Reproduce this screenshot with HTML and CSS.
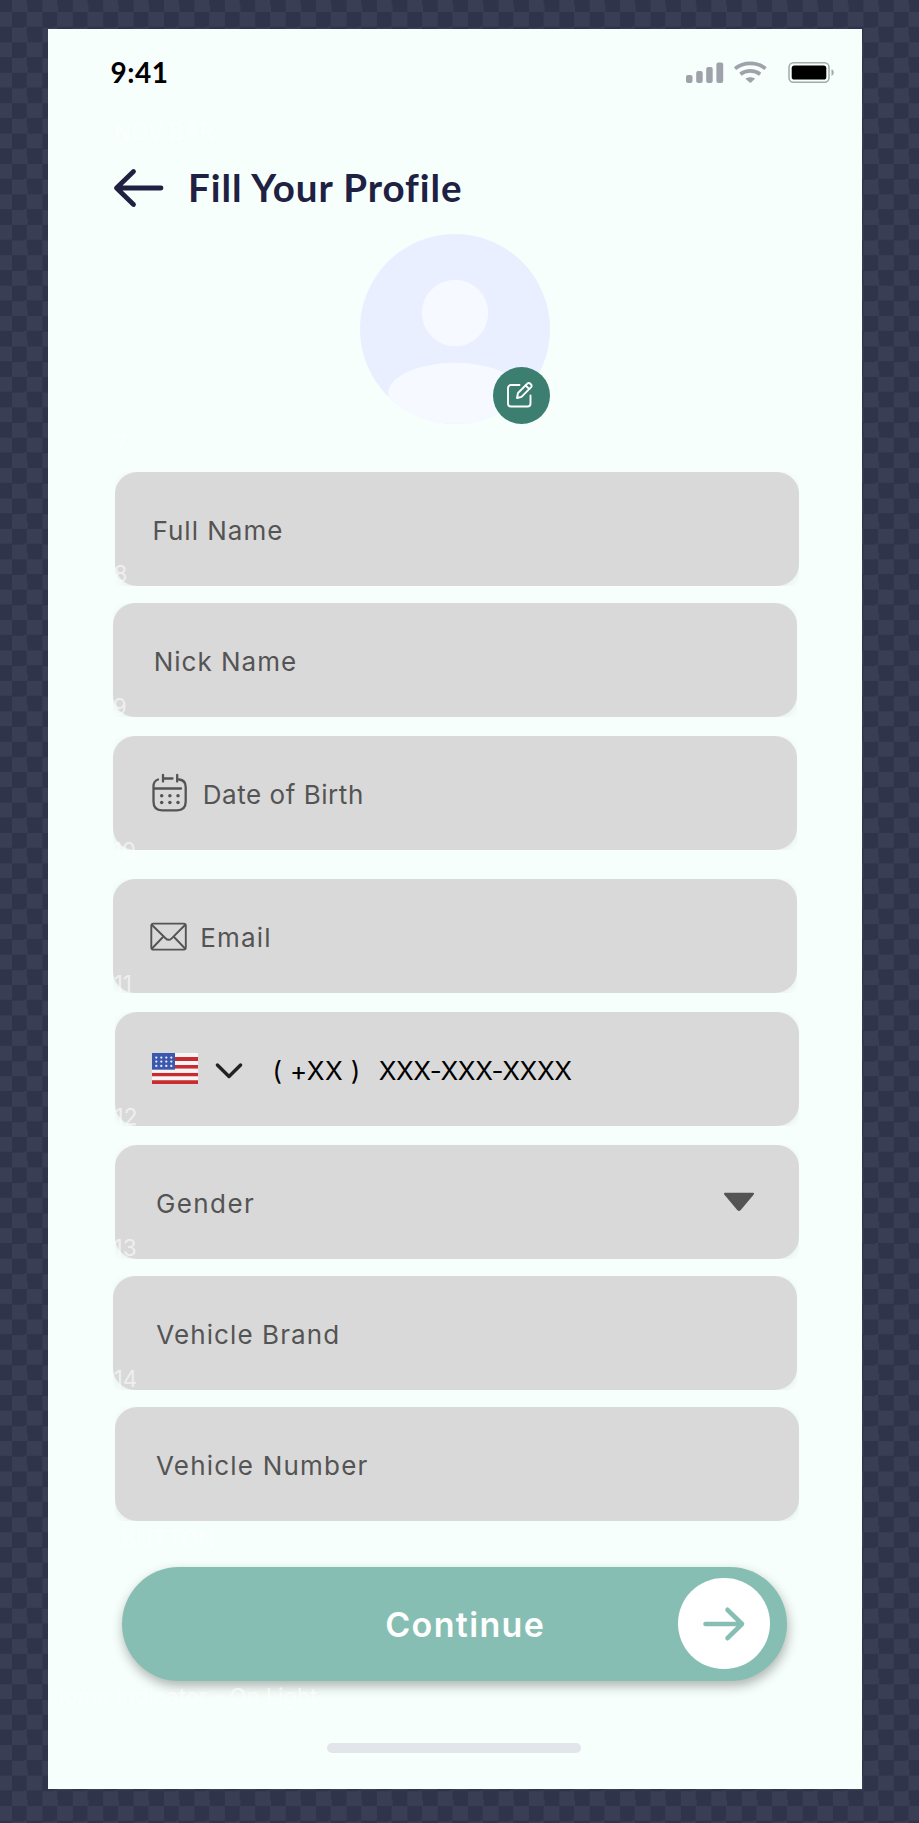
FILE: index.html
```html
<!DOCTYPE html>
<html lang="en">
<head>
<meta charset="utf-8">
<title>Fill Your Profile</title>
<link rel="stylesheet" href="styles.css">
</head>
<body>
<main class="screen">
  <header class="status">
    <span class="time">9:41</span>
    <svg class="status-icons" width="150" height="24" viewBox="0 0 150 24">
      <g fill="#a0a2ab">
        <rect x="0" y="14" width="6.5" height="8" rx="2"/>
        <rect x="10.2" y="10" width="6.5" height="12" rx="2"/>
        <rect x="20.2" y="6" width="6.5" height="16" rx="2"/>
        <rect x="30.4" y="1.5" width="6.8" height="20.5" rx="2"/>
        <path d="M59.500 17.700C62 15.700 66.600 15.700 69 17.700L65 21.500q-.7.600-1.400 0z"/>
      </g>
      <g fill="none" stroke="#a0a2ab" stroke-width="3.7">
        <path d="M49 7.6C57.5.7 71 .7 79.5 7.6"/>
        <path d="M54.4 13.2C60 8.8 68.6 8.8 74.2 13.2"/>
      </g>
      <rect x="103" y="1.7" width="40" height="19.6" rx="4.5" fill="none" stroke="#a3aaa8" stroke-width="1.5"/>
      <rect x="105.7" y="4.6" width="34.6" height="14" rx="2.6"/>
      <path d="M145.5 8.2c3 1.2 3 5.4 0 6.6z" fill="#a3aaa8"/>
    </svg>
  </header>

  <span class="layer layer-nav">NOV BAR</span>

  <div class="nav">
    <svg width="52" height="42" viewBox="0 0 52 42" fill="none" stroke="#202042" stroke-width="4.8" stroke-linecap="round" stroke-linejoin="round"><path d="M48 21H4M20.5 4.5 3.5 21l17 16.5"/></svg>
    <h1 class="title">Fill Your Profile</h1>
  </div>

  <div class="avatar">
    <svg width="190" height="190" viewBox="0 0 190 190">
      <defs><clipPath id="disc"><circle cx="95" cy="95" r="95"/></clipPath></defs>
      <circle cx="95" cy="95" r="95" fill="#e9efff"/>
      <circle cx="95" cy="79" r="33.2" fill="#f6f9ff"/>
      <ellipse cx="95" cy="159.4" rx="66.8" ry="30.6" fill="#f6f9ff" clip-path="url(#disc)"/>
    </svg>
    <span class="edit">
      <svg width="30" height="30" viewBox="0 0 30 30" fill="none" stroke="#fff" stroke-width="1.9" stroke-linecap="round" stroke-linejoin="round">
        <path d="M13.500 4H5a3 3 0 0 0-3 3v15.500a3 3 0 0 0 3 3h16.500a3 3 0 0 0 3-3v-8"/>
        <path d="m11 17 1-5L21.300 2.700c1.900-1.900 5.700 1.500 3.600 3.700l-9.400 9.400z"/><path d="m19.700 4.500 3.600 3.600"/>
      </svg>
    </span>
  </div>

  <form class="form">
    <div class="row r1"><div class="clip"><div class="field"><span class="label l-full">Full Name</span></div></div><span class="layer tag t7">7</span><span class="layer tag t8">8</span></div>
    <div class="row r2 out"><div class="clip"><div class="field"><span class="label l-nick">Nick Name</span></div></div><span class="layer tag t9">9</span></div>
    <div class="row r3 out"><div class="clip"><div class="field dob">
      <svg width="36" height="40" viewBox="0 0 36 40" fill="none" stroke="#545454" stroke-width="2.3" stroke-linecap="round">
        <path d="M6 6.500C3 7.500 1.500 10 1.500 13.500v15c0 6 2.500 8.800 8.500 8.800h15c6 0 8.700-2.800 8.700-8.800V14c0-4.500-2-7-6.500-7.500M11 2v6.500M25.200 2v6.500M11 5.500h9.500M25.200 5.500v2M2 15.500h27"/>
        <g fill="#545454" stroke="none"><circle cx="9.700" cy="22.700" r="1.750"/><circle cx="17.900" cy="22.700" r="1.750"/><circle cx="26" cy="22.700" r="1.750"/><circle cx="9.700" cy="29.600" r="1.750"/><circle cx="17.900" cy="29.600" r="1.750"/><circle cx="26" cy="29.600" r="1.750"/></g>
      </svg>
      <span class="label l-dob">Date of Birth</span></div></div><span class="layer tag t10">10</span></div>
    <div class="row r4 out"><div class="clip"><div class="field email">
      <svg width="38" height="30" viewBox="0 0 38 30" fill="none" stroke="#545454" stroke-width="1.900" stroke-linecap="round" stroke-linejoin="round">
        <rect x="1.300" y="1.600" width="34.500" height="26" rx="2"/>
        <path d="m2 3 13.500 13.300c2 2 4.200 2 6.200 0L35 3M2 26.500l10.500-11M35 26.500l-10.500-11"/>
      </svg>
      <span class="label l-email">Email</span></div></div><span class="layer tag t11">11</span></div>
    <div class="row r5"><div class="clip"><div class="field phone">
      <svg class="flag" width="46" height="31" viewBox="0 0 46 31">
        <path fill="#f5f5f5" d="M0 0h46v31H0z"/>
        <path fill="#c82c31" d="M0 4h46v4H0zM0 12h46v3.800H0zM0 19.800h46v3.400H0zM0 27.200h46V31H0z"/>
        <path fill="#f5f5f5" d="M0 15.800h46v4H0z"/>
        <path fill="#3c58ad" d="M0 0h23v16.700H0z"/>
        <g stroke="#e8ecfa" stroke-width="2.300" stroke-linecap="round" stroke-dasharray="0 5"><path d="M4.300 4.600h16M4.300 8.600h16M4.300 12.900h16"/></g>
      </svg>
      <svg class="chevron" width="30" height="18" viewBox="0 0 30 18" fill="none" stroke="#222" stroke-width="3.400" stroke-linecap="round" stroke-linejoin="round"><path d="m3.400 3 11.600 11.500L26.600 3"/></svg>
      <span class="number"><span class="code">( +XX )</span><span class="digits">XXX-XXX-XXXX</span></span></div></div><span class="layer tag t12">12</span></div>
    <div class="row r6"><div class="clip"><div class="field inset"><span class="label l-gender">Gender</span>
      <svg class="caret" width="34" height="22" viewBox="0 0 34 22"><path d="M3 1.800h28L17.800 17.500q-.8.800-1.600 0z" transform="translate(0 1)" fill="#545454" stroke="#545454" stroke-width="2" stroke-linejoin="round"/></svg></div></div><span class="layer tag t13">13</span></div>
    <div class="row r7 out"><div class="clip"><div class="field inset"><span class="label l-brand">Vehicle Brand</span></div></div><span class="layer tag t14">14</span></div>
    <div class="row r8"><div class="clip"><div class="field inset"><span class="label l-vnum">Vehicle Number</span></div></div></div>
  </form>

  <span class="layer layer-button">BUTTON</span>
  <button class="continue" type="button">
    <span class="continue-text">Continue</span>
    <span class="go"><svg width="46" height="38" viewBox="0 0 46 38" fill="none" stroke="#86beb3" stroke-width="4.600" stroke-linecap="round" stroke-linejoin="round"><path d="M4.500 19H41M26.500 4.800 41 19 26.500 33.200"/></svg></span>
  </button>
  <span class="layer layer-home">Home Indicator - On Light</span>
  <div class="home"></div>
</main>
</body>
</html>
```
FILE: styles.css
```css
* { box-sizing: border-box; }

body {
  margin: 0;
  padding: 29px 0 34px 48px;
  height: 1823px;
  overflow: hidden;
  font-family: Inter, "Open Sans", sans-serif;
  background: conic-gradient(#3a3e54 25%, #2f344a 0 50%, #3a3e54 0 75%, #2f344a 0) 12px 12px / 30.42px 30.42px;
}

svg { display: block; flex: none; }

.screen {
  position: relative;
  width: 813.6px;
  height: 1760px;
  overflow: hidden;
  background: #f6fffc;
}

.status {
  display: flex;
  justify-content: space-between;
  align-items: center;
  height: 88px;
  padding: 0 26px 0 62.500px;
}
.time {
  padding-bottom: 2px;
  font: 700 28px/34px Lato, sans-serif;
  letter-spacing: .5px;
  color: #000;
}

.nav {
  display: flex;
  align-items: center;
  gap: 23px;
  height: 84px;
  margin: 29px 0 0 65px;
}
.title {
  margin: 0;
  padding-bottom: 2px;
  font: 700 38.500px/50px Lato, sans-serif;
  letter-spacing: .95px;
  color: #202042;
  white-space: nowrap;
}

.avatar {
  position: relative;
  width: 190px;
  height: 190px;
  margin: 4px 0 0 311.700px;
}
.edit {
  position: absolute;
  right: 0;
  bottom: 0;
  display: grid;
  place-items: center;
  width: 57px;
  height: 57px;
  border-radius: 50%;
  background: #3c7e70;
}

.form { margin: 48px 0 0 66.500px; width: 684.500px; }
.row { position: relative; height: 114px; margin-bottom: 17px; }
.row.out { margin-left: -1.800px; margin-right: 1.800px; }
.r2 { margin-bottom: 19px; }
.r3 { margin-bottom: 29px; }
.r4, .r5 { margin-bottom: 19px; }
.r8 { margin-bottom: 0; }
.clip { height: 100%; overflow: hidden; }
.field {
  display: flex;
  align-items: center;
  height: 100%;
  padding-left: 38px;
  border-radius: 22px;
  background: #d9d9d9;
  box-shadow: 0 2px 8px rgba(0, 0, 0, .07);
}
.inset { padding-left: 41.500px; }
.out .inset { padding-left: 43.500px; }
.label {
  padding-top: 3px;
  font-size: 26px;
  line-height: 36px;
  color: #545454;
  white-space: nowrap;
}
.l-full, .l-nick { letter-spacing: 1px; }
.l-dob { letter-spacing: .55px; }
.l-email { letter-spacing: 1.200px; }
.l-gender { letter-spacing: 1.400px; }
.l-brand { letter-spacing: 1.100px; }
.l-vnum { letter-spacing: 1.200px; }
.r2 .field { padding-left: 41px; }
.r3 .dob { padding-left: 39.500px; gap: 14.500px; }
.r4 .email { padding-left: 37.500px; gap: 12px; }
.email svg { margin-top: 1px; }
.phone { padding-left: 37.500px; }
.flag { margin-bottom: 1px; }
.chevron { margin-left: 15.500px; margin-top: 3px; }
.number {
  display: flex;
  gap: 18px;
  margin-left: 29px;
  padding-top: 4px;
  font-size: 26px;
  line-height: 36px;
  color: #000;
  white-space: pre;
}
.code { letter-spacing: .4px; }
.digits { letter-spacing: -.4px; }
.caret { margin-left: auto; margin-right: 43.500px; }

/* Faint layer names laid over the artboard */
.layer {
  position: absolute;
  font-size: 22.500px;
  line-height: 28px;
  color: rgba(255, 255, 255, .6);
  white-space: nowrap;
}
.layer-nav { left: 66px; top: 89px; }
.layer-button { left: 73px; top: 1496px; }
.layer-home { left: 0; top: 1653px; font-size: 22px; }
.t7 { left: 0; top: -42px; }
.t8 { left: -1px; bottom: -2px; }
.t9 { left: 0; bottom: -4px; }
.t10 { left: 0; bottom: -15px; }
.t11 { left: 1px; bottom: -5px; }
.t12 { left: 0; bottom: -5px; }
.t13 { left: -1px; bottom: -3px; }
.t14 { left: 1px; bottom: -3px; }

.continue {
  position: relative;
  display: flex;
  align-items: center;
  justify-content: flex-end;
  width: 665px;
  height: 114px;
  margin: 45.500px 0 0 73.700px;
  padding: 0 17px 0 0;
  border: 0;
  border-radius: 57px;
  background: #86beb3;
  box-shadow: 1px 5px 12px rgba(0, 0, 0, .3);
}
.continue-text {
  margin-right: 133px;
  padding-top: 2px;
  font: 600 34px/44px Inter, sans-serif;
  letter-spacing: 1.350px;
  color: #fff;
}
.go {
  display: grid;
  place-items: center;
  width: 91.500px;
  height: 91.500px;
  border-radius: 50%;
  background: #fff;
}
.home {
  width: 254px;
  height: 10px;
  margin: 62.500px 0 0 279px;
  border-radius: 5px;
  background: #e2e5ea;
}
```
